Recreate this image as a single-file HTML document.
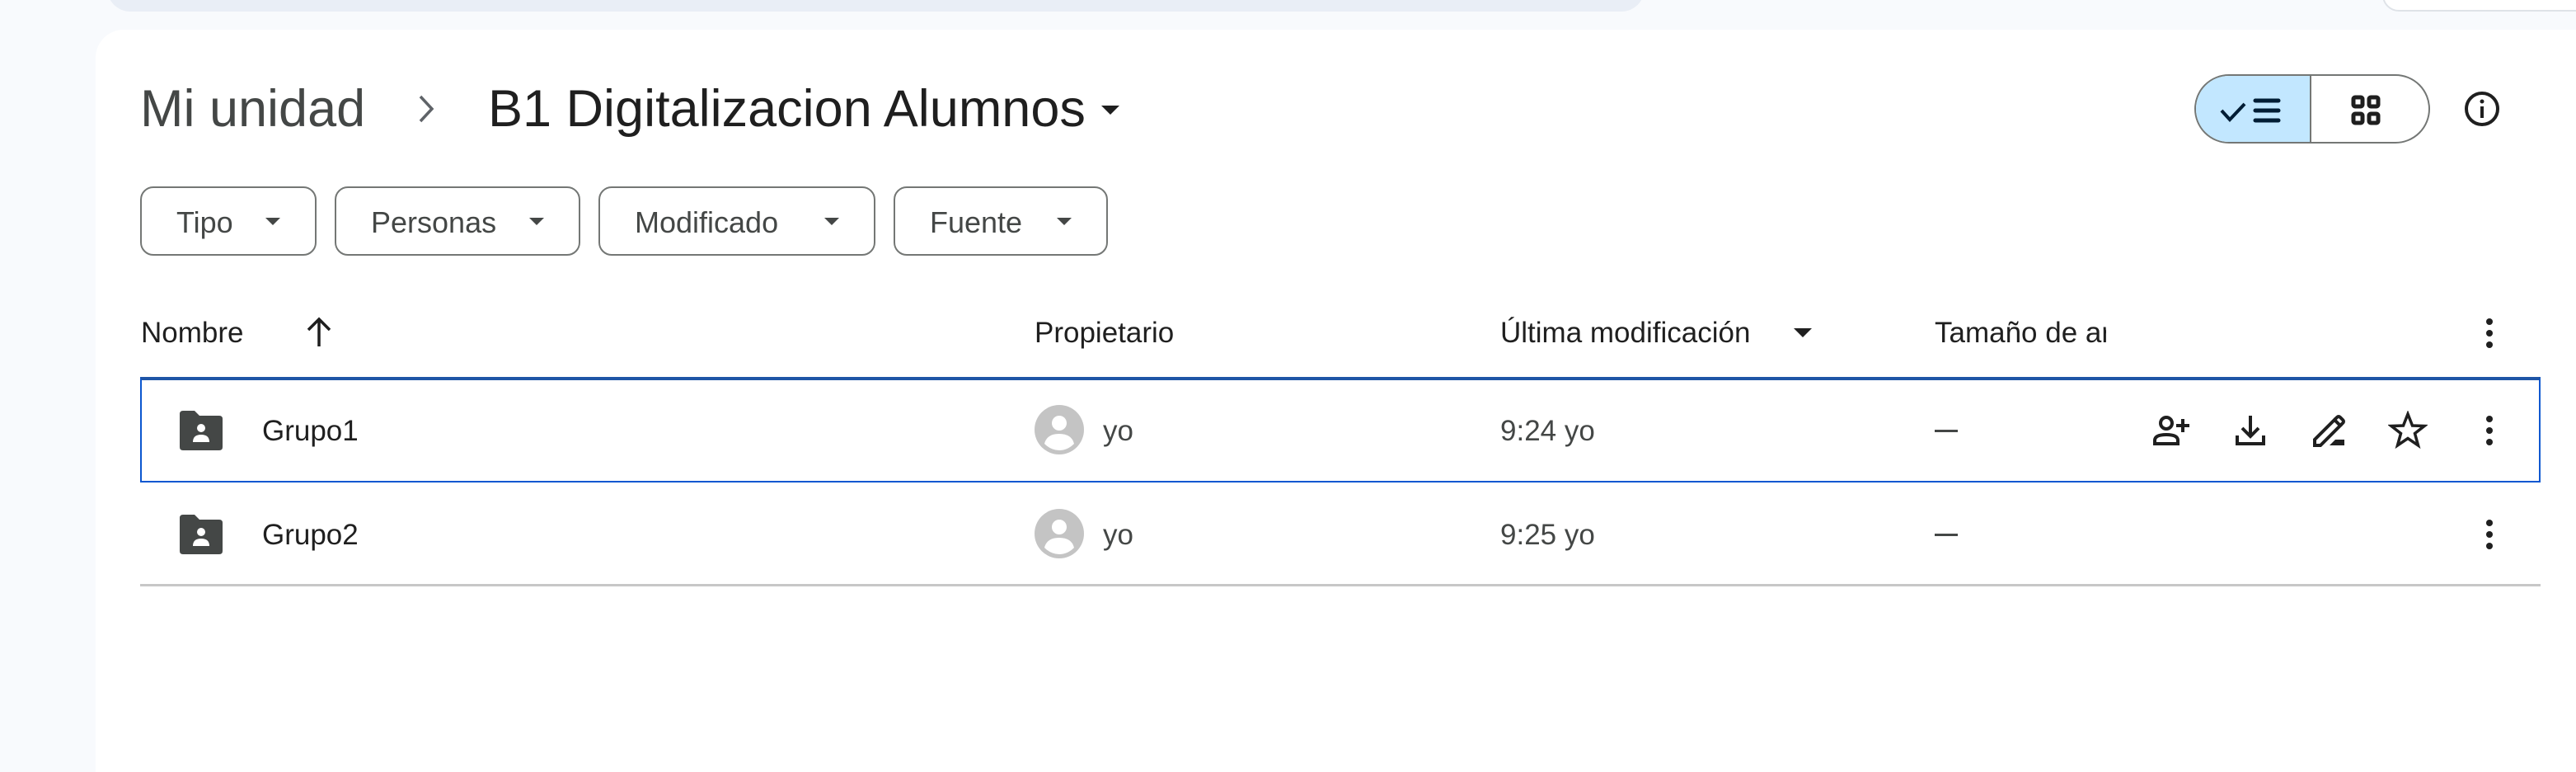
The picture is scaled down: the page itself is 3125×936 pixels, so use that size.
<!DOCTYPE html>
<html><head><meta charset="utf-8"><style>
*{margin:0;padding:0;box-sizing:border-box}
body{width:3125px;height:877px;background:#f8fafd;position:relative;overflow:hidden;font-family:"Liberation Sans",Arial,sans-serif}
.a{position:absolute}
.t{position:absolute;white-space:nowrap;line-height:1}
.chip{position:absolute;top:226px;height:84px;border:2px solid #747775;border-radius:16px;background:#fff}
.chip span{position:absolute;left:42px;top:21px;font-size:36px;color:#444746}
.chip i{position:absolute;top:36px;width:0;height:0;border-left:9px solid transparent;border-right:9px solid transparent;border-top:9px solid #444746}
.hd{font-size:35px;color:#1f1f1f;top:386px}
.cell{font-size:35px;color:#1f1f1f}
</style></head><body>
<div class="a" style="left:130px;top:-20px;width:1865px;height:34px;background:#e9eef6;border-radius:0 0 28px 28px"></div>
<div class="a" style="left:2890px;top:-20px;width:260px;height:34px;background:#fff;border:2px solid #dfe3e8;border-radius:0 0 0 20px"></div>
<div class="a" style="left:116px;top:36px;width:3040px;height:900px;background:#fff;border-radius:34px 34px 0 0"></div>

<div class="t" style="left:170px;top:101px;font-size:63px;color:#444746">Mi unidad</div>
<svg class="a" style="left:502px;top:113px" width="30" height="38" viewBox="0 0 30 38"><path d="M8 4 L22 19 L8 34" fill="none" stroke="#5f6368" stroke-width="3.5"/></svg>
<div class="t" style="left:592px;top:101px;font-size:63px;color:#1f1f1f">B1 Digitalizacion Alumnos</div>
<div class="a" style="left:1336px;top:128px;border-left:11px solid transparent;border-right:11px solid transparent;border-top:11px solid #1f1f1f"></div>

<div class="chip" style="left:170px;width:214px"><span>Tipo</span><i style="left:150px"></i></div>
<div class="chip" style="left:406px;width:298px"><span>Personas</span><i style="left:234px"></i></div>
<div class="chip" style="left:726px;width:336px"><span>Modificado</span><i style="left:272px"></i></div>
<div class="chip" style="left:1084px;width:260px"><span>Fuente</span><i style="left:196px"></i></div>

<div class="a" style="left:2662px;top:90px;width:286px;height:84px;border:2px solid #747775;border-radius:42px;overflow:hidden;background:#fff">
 <div class="a" style="left:0;top:0;width:140px;height:84px;background:#c2e7ff;border-right:2px solid #747775"></div>
 <svg class="a" style="left:28px;top:22px" width="80" height="40" viewBox="0 0 80 40"><path d="M3 20 L13 31 L31 12" fill="none" stroke="#001d35" stroke-width="4"/><path d="M44 8 H72 M44 20 H72 M44 32 H72" stroke="#001d35" stroke-width="5" stroke-linecap="round"/></svg>
 <svg class="a" style="left:186px;top:22px" width="40" height="40" viewBox="0 0 40 40"><g fill="none" stroke="#1f1f1f" stroke-width="5"><rect x="5" y="4" width="11" height="11" rx="2"/><rect x="24" y="4" width="11" height="11" rx="2"/><rect x="5" y="24" width="11" height="11" rx="2"/><rect x="24" y="24" width="11" height="11" rx="2"/></g></svg>
</div>
<svg class="a" style="left:2987px;top:108px" width="48" height="48" viewBox="0 0 48 48"><circle cx="24" cy="24" r="19" fill="none" stroke="#1f1f1f" stroke-width="4"/><rect x="22" y="21" width="4" height="14" fill="#1f1f1f"/><circle cx="24" cy="15" r="2.5" fill="#1f1f1f"/></svg>

<div class="t hd" style="left:171px">Nombre</div>
<svg class="a" style="left:370px;top:382px" width="34" height="40" viewBox="0 0 34 40"><path d="M17 38 V5 M4 18 L17 5 L30 18" fill="none" stroke="#1f1f1f" stroke-width="3.5"/></svg>
<div class="t hd" style="left:1255px">Propietario</div>
<div class="t hd" style="left:1820px">Última modificación</div>
<div class="a" style="left:2176px;top:398px;border-left:11px solid transparent;border-right:11px solid transparent;border-top:11px solid #1f1f1f"></div>
<div class="t hd" style="left:2347px;width:208px;overflow:hidden">Tamaño de archivo</div>
<svg class="a" style="left:3006px;top:384px" width="28" height="40" viewBox="0 0 28 40"><circle cx="14" cy="6" r="4" fill="#1f1f1f"/><circle cx="14" cy="20" r="4" fill="#1f1f1f"/><circle cx="14" cy="34" r="4" fill="#1f1f1f"/></svg>

<div class="a" style="left:170px;top:457px;width:2912px;height:128px;border:2px solid #0b57d0;border-top:4px solid #1f55a6"></div>
<div class="a" style="left:170px;top:708px;width:2912px;height:3px;background:#c7c7c7"></div>

<svg class="a" style="left:216px;top:498px" width="56" height="48" viewBox="0 0 56 48"><path d="M2 4 Q2 0 6 0 H20 L26 6 H50 Q54 6 54 10 V44 Q54 48 50 48 H6 Q2 48 2 44 Z" fill="#444746"/><circle cx="28" cy="21" r="5" fill="#fff"/><path d="M18 38 Q18 29 28 29 Q38 29 38 38 Z" fill="#fff"/></svg>
<div class="t cell" style="left:318px;top:505px">Grupo1</div>
<svg class="a" style="left:1254px;top:490px" width="62" height="62" viewBox="0 0 62 62"><circle cx="31" cy="31" r="30" fill="#c4c4c4"/><circle cx="31" cy="23" r="9" fill="#fff"/><path d="M13 48 Q16 36 31 36 Q46 36 49 48 Q41 56 31 56 Q21 56 13 48Z" fill="#fff"/></svg>
<div class="t cell" style="left:1338px;top:505px;color:#444746">yo</div>
<div class="t cell" style="left:1820px;top:505px;color:#444746">9:24 yo</div>
<div class="a" style="left:2347px;top:521px;width:28px;height:3px;background:#444746"></div>
<svg class="a" style="left:2610px;top:498px" width="48" height="48" viewBox="0 0 48 48"><g fill="none" stroke="#1f1f1f" stroke-width="4"><circle cx="18" cy="15" r="7"/><path d="M4 40 V36 Q4 29 18 29 Q32 29 32 36 V40 Z"/><path d="M38 10 V26 M30 18 H46"/></g></svg>
<svg class="a" style="left:2706px;top:498px" width="48" height="48" viewBox="0 0 48 48"><g fill="none" stroke="#1f1f1f" stroke-width="4"><path d="M24 6 V30 M14 21 L24 31 L34 21"/><path d="M8 30 V40 H40 V30"/></g></svg>
<svg class="a" style="left:2802px;top:498px" width="48" height="48" viewBox="0 0 48 48"><g fill="none" stroke="#1f1f1f" stroke-width="4"><path d="M6 42 V35 L30 11 L37 18 L13 42 Z"/><path d="M30 11 L33 8 Q35 6 37 8 L40 11 Q42 13 40 15 L37 18"/></g><path d="M24 42 H42 V35 H31 Z" fill="#1f1f1f"/></svg>
<svg class="a" style="left:2897px;top:498px" width="48" height="48" viewBox="0 0 48 48"><path d="M24 4 L29.5 18 L44 18.5 L32.5 27.5 L36.5 42 L24 33.5 L11.5 42 L15.5 27.5 L4 18.5 L18.5 18 Z" fill="none" stroke="#1f1f1f" stroke-width="3.5"/></svg>
<svg class="a" style="left:3006px;top:502px" width="28" height="40" viewBox="0 0 28 40"><circle cx="14" cy="6" r="4" fill="#1f1f1f"/><circle cx="14" cy="20" r="4" fill="#1f1f1f"/><circle cx="14" cy="34" r="4" fill="#1f1f1f"/></svg>

<svg class="a" style="left:216px;top:624px" width="56" height="48" viewBox="0 0 56 48"><path d="M2 4 Q2 0 6 0 H20 L26 6 H50 Q54 6 54 10 V44 Q54 48 50 48 H6 Q2 48 2 44 Z" fill="#444746"/><circle cx="28" cy="21" r="5" fill="#fff"/><path d="M18 38 Q18 29 28 29 Q38 29 38 38 Z" fill="#fff"/></svg>
<div class="t cell" style="left:318px;top:631px">Grupo2</div>
<svg class="a" style="left:1254px;top:616px" width="62" height="62" viewBox="0 0 62 62"><circle cx="31" cy="31" r="30" fill="#c4c4c4"/><circle cx="31" cy="23" r="9" fill="#fff"/><path d="M13 48 Q16 36 31 36 Q46 36 49 48 Q41 56 31 56 Q21 56 13 48Z" fill="#fff"/></svg>
<div class="t cell" style="left:1338px;top:631px;color:#444746">yo</div>
<div class="t cell" style="left:1820px;top:631px;color:#444746">9:25 yo</div>
<div class="a" style="left:2347px;top:647px;width:28px;height:3px;background:#444746"></div>
<svg class="a" style="left:3006px;top:628px" width="28" height="40" viewBox="0 0 28 40"><circle cx="14" cy="6" r="4" fill="#1f1f1f"/><circle cx="14" cy="20" r="4" fill="#1f1f1f"/><circle cx="14" cy="34" r="4" fill="#1f1f1f"/></svg>
</body></html>
